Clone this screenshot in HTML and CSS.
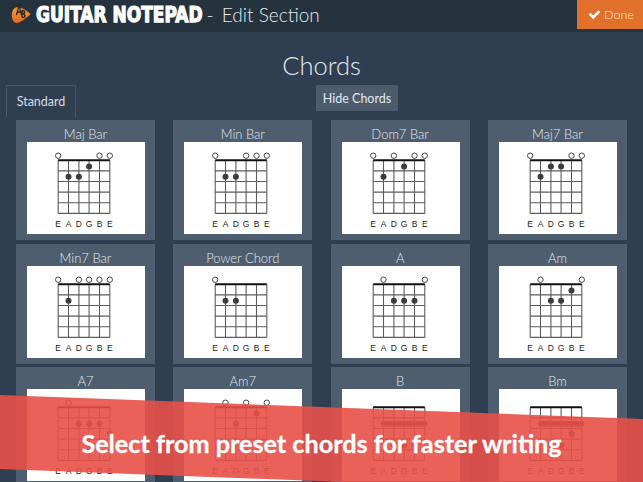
FILE: index.html
```html
<!DOCTYPE html>
<html lang="en">

<head>
    <meta charset="UTF-8">
    <title>Guitar Notepad - Edit Section</title>
    <link rel="stylesheet" href="styles.css">
</head>

<body>
    <svg class="defs" width="0" height="0">
        <symbol id="fretboard" viewBox="0 0 118 92">
            <path class="frets" d="M31.2 28.9H82.8M31.2 39.5H82.8M31.2 50.1H82.8M31.2 60.8H82.8M31.2 71.4H82.8" />
            <path class="frets" d="M31.2 18.3V71.4M41.5 18.3V71.4M51.9 18.3V71.4M62.1 18.3V71.4M72.5 18.3V71.4M82.8 18.3V71.4" />
            <path class="nut" d="M31.2 18.3H82.8" />
        </symbol>
    </svg>

    <header class="topbar">
        <div class="brand">
            <svg class="logo" viewBox="0 0 20 20">
                <defs>
                    <linearGradient id="pick" x1="0" y1="0" x2="0" y2="1">
                        <stop offset="0" stop-color="#f0a030" />
                        <stop offset="1" stop-color="#e8661f" />
                    </linearGradient>
                </defs>
                <path fill="url(#pick)" d="M5 3.5C8 2.5 13 4.5 19 9.5C19.5 10 19.3 10.6 18.8 10.9C14 14.5 9 19 5.5 19C2.5 19 .8 15 .8 11.5C.8 8 2 4.5 5 3.5Z" />
                <path class="logo-mark" d="M6 .8H10M8 .8L5.5 11M8 .8L10.5 11M6.5 8H9.8M11 6.5V13.5M11 6.5C14.5 6.5 14.5 9.8 11 9.8C15 9.8 15 13.5 11 13.5" />
            </svg>
            <span class="wordmark">GUITAR NOTEPAD</span>
            <span class="page-name"><span class="dash">-</span> Edit Section</span>
        </div>
        <button class="done-button">
            <svg class="check" viewBox="0 0 1792 1792"><path d="M1671 566q0 40-28 68l-724 724-136 136q-28 28-68 28t-68-28l-136-136-362-362q-28-28-28-68t28-68l136-136q28-28 68-28t68 28l294 295 656-657q28-28 68-28t68 28l136 136q28 28 28 68z" /></svg>
            Done
        </button>
    </header>

    <h1 class="title">Chords</h1>

    <div class="toolbar">
        <div class="tab">Standard</div>
        <button class="hide-button">Hide Chords</button>
    </div>

    <div class="chord-grid">
        <div class="chord">
            <div class="chord-name">Maj Bar</div>
            <svg class="diagram" viewBox="0 0 118 92">
                <use href="#fretboard" />
                <g class="open"><circle cx="31.2" cy="13.7" r="2.7" /><circle cx="72.5" cy="13.7" r="2.7" /><circle cx="82.8" cy="13.7" r="2.7" /></g>
                <g class="dots"><circle cx="62.1" cy="24.4" r="3" /><circle cx="41.5" cy="34.7" r="3" /><circle cx="51.9" cy="34.7" r="3" /></g>
                <text class="strings" x="31.2 41.5 51.9 62.1 72.5 82.8" y="84.5">EADGBE</text>
            </svg>
        </div>
        <div class="chord">
            <div class="chord-name">Min Bar</div>
            <svg class="diagram" viewBox="0 0 118 92">
                <use href="#fretboard" />
                <g class="open"><circle cx="31.2" cy="13.7" r="2.7" /><circle cx="62.1" cy="13.7" r="2.7" /><circle cx="72.5" cy="13.7" r="2.7" /><circle cx="82.8" cy="13.7" r="2.7" /></g>
                <g class="dots"><circle cx="41.5" cy="34.7" r="3" /><circle cx="51.9" cy="34.7" r="3" /></g>
                <text class="strings" x="31.2 41.5 51.9 62.1 72.5 82.8" y="84.5">EADGBE</text>
            </svg>
        </div>
        <div class="chord">
            <div class="chord-name">Dom7 Bar</div>
            <svg class="diagram" viewBox="0 0 118 92">
                <use href="#fretboard" />
                <g class="open"><circle cx="31.2" cy="13.7" r="2.7" /><circle cx="51.9" cy="13.7" r="2.7" /><circle cx="72.5" cy="13.7" r="2.7" /><circle cx="82.8" cy="13.7" r="2.7" /></g>
                <g class="dots"><circle cx="62.1" cy="24.4" r="3" /><circle cx="41.5" cy="34.7" r="3" /></g>
                <text class="strings" x="31.2 41.5 51.9 62.1 72.5 82.8" y="84.5">EADGBE</text>
            </svg>
        </div>
        <div class="chord">
            <div class="chord-name">Maj7 Bar</div>
            <svg class="diagram" viewBox="0 0 118 92">
                <use href="#fretboard" />
                <g class="open"><circle cx="31.2" cy="13.7" r="2.7" /><circle cx="72.5" cy="13.7" r="2.7" /><circle cx="82.8" cy="13.7" r="2.7" /></g>
                <g class="dots"><circle cx="51.9" cy="24.4" r="3" /><circle cx="62.1" cy="24.4" r="3" /><circle cx="41.5" cy="34.7" r="3" /></g>
                <text class="strings" x="31.2 41.5 51.9 62.1 72.5 82.8" y="84.5">EADGBE</text>
            </svg>
        </div>

        <div class="chord">
            <div class="chord-name">Min7 Bar</div>
            <svg class="diagram" viewBox="0 0 118 92">
                <use href="#fretboard" />
                <g class="open"><circle cx="31.2" cy="13.7" r="2.7" /><circle cx="51.9" cy="13.7" r="2.7" /><circle cx="62.1" cy="13.7" r="2.7" /><circle cx="72.5" cy="13.7" r="2.7" /><circle cx="82.8" cy="13.7" r="2.7" /></g>
                <g class="dots"><circle cx="41.5" cy="34.7" r="3" /></g>
                <text class="strings" x="31.2 41.5 51.9 62.1 72.5 82.8" y="84.5">EADGBE</text>
            </svg>
        </div>
        <div class="chord">
            <div class="chord-name">Power Chord</div>
            <svg class="diagram" viewBox="0 0 118 92">
                <use href="#fretboard" />
                <g class="open"><circle cx="31.2" cy="13.7" r="2.7" /></g>
                <g class="dots"><circle cx="41.5" cy="34.7" r="3" /><circle cx="51.9" cy="34.7" r="3" /></g>
                <text class="strings" x="31.2 41.5 51.9 62.1 72.5 82.8" y="84.5">EADGBE</text>
            </svg>
        </div>
        <div class="chord">
            <div class="chord-name">A</div>
            <svg class="diagram" viewBox="0 0 118 92">
                <use href="#fretboard" />
                <g class="open"><circle cx="41.5" cy="13.7" r="2.7" /><circle cx="82.8" cy="13.7" r="2.7" /></g>
                <g class="dots"><circle cx="51.9" cy="34.7" r="3" /><circle cx="62.1" cy="34.7" r="3" /><circle cx="72.5" cy="34.7" r="3" /></g>
                <text class="strings" x="31.2 41.5 51.9 62.1 72.5 82.8" y="84.5">EADGBE</text>
            </svg>
        </div>
        <div class="chord">
            <div class="chord-name">Am</div>
            <svg class="diagram" viewBox="0 0 118 92">
                <use href="#fretboard" />
                <g class="open"><circle cx="41.5" cy="13.7" r="2.7" /><circle cx="82.8" cy="13.7" r="2.7" /></g>
                <g class="dots"><circle cx="72.5" cy="24.4" r="3" /><circle cx="51.9" cy="34.7" r="3" /><circle cx="62.1" cy="34.7" r="3" /></g>
                <text class="strings" x="31.2 41.5 51.9 62.1 72.5 82.8" y="84.5">EADGBE</text>
            </svg>
        </div>

        <div class="chord">
            <div class="chord-name">A7</div>
            <svg class="diagram" viewBox="0 0 118 92">
                <use href="#fretboard" />
                <g class="open"><circle cx="41.5" cy="13.7" r="2.7" /></g>
                <g class="dots"><circle cx="51.9" cy="34.7" r="3" /><circle cx="62.1" cy="34.7" r="3" /><circle cx="72.5" cy="34.7" r="3" /><circle cx="82.8" cy="44.4" r="3" /></g>
                <text class="strings" x="31.2 41.5 51.9 62.1 72.5 82.8" y="84.5">EADGBE</text>
            </svg>
        </div>
        <div class="chord">
            <div class="chord-name">Am7</div>
            <svg class="diagram" viewBox="0 0 118 92">
                <use href="#fretboard" />
                <g class="open"><circle cx="41.5" cy="13.7" r="2.7" /><circle cx="62.1" cy="13.7" r="2.7" /><circle cx="82.8" cy="13.7" r="2.7" /></g>
                <g class="dots"><circle cx="72.5" cy="24.4" r="3" /><circle cx="51.9" cy="34.7" r="3" /></g>
                <text class="strings" x="31.2 41.5 51.9 62.1 72.5 82.8" y="84.5">EADGBE</text>
            </svg>
        </div>
        <div class="chord">
            <div class="chord-name">B</div>
            <svg class="diagram" viewBox="0 0 118 92">
                <use href="#fretboard" />
                <path class="barre" d="M41.5 34.7H82.8" />
                <g class="dots"><circle cx="51.9" cy="56" r="3" /><circle cx="62.1" cy="56" r="3" /><circle cx="72.5" cy="56" r="3" /></g>
                <text class="strings" x="31.2 41.5 51.9 62.1 72.5 82.8" y="84.5">EADGBE</text>
            </svg>
        </div>
        <div class="chord">
            <div class="chord-name">Bm</div>
            <svg class="diagram" viewBox="0 0 118 92">
                <use href="#fretboard" />
                <path class="barre" d="M41.5 34.7H82.8" />
                <g class="dots"><circle cx="72.5" cy="45" r="3" /><circle cx="51.9" cy="56" r="3" /><circle cx="62.1" cy="56" r="3" /></g>
                <text class="strings" x="31.2 41.5 51.9 62.1 72.5 82.8" y="84.5">EADGBE</text>
            </svg>
        </div>
    </div>

    <div class="ribbon">Select from preset chords for faster writing</div>
</body>

</html>
```

FILE: styles.css
```css
/* Estilo global */
body {
    font-family: Lato, sans-serif;
    background-color: #2f3f51;
    color: #e4e9ee;
    margin: 0;
    width: 643px;
    height: 482px;
    overflow: hidden;
    position: relative;
}

.defs {
    position: absolute;
}

/* barra superior */
.topbar {
    display: flex;
    justify-content: space-between;
    align-items: flex-start;
    height: 32px;
    background-color: #25333f;
}

.brand {
    display: flex;
    align-items: center;
    height: 28px;
    padding-left: 11px;
}

.logo {
    width: 20px;
    height: 20px;
    margin-right: 5px;
}

.logo-mark {
    fill: none;
    stroke: #2c2620;
    stroke-width: 1.3;
}

.wordmark {
    display: inline-block;
    font-family: "DejaVu Sans", sans-serif;
    font-weight: 700;
    font-size: 17px;
    color: #fff;
    -webkit-text-stroke: 1px #fff;
    transform: scaleY(1.25);
    white-space: nowrap;
}

.page-name {
    font-size: 19px;
    font-weight: 300;
    margin-left: 4px;
    white-space: nowrap;
}

.dash {
    margin-right: 3px;
}

.done-button {
    display: flex;
    align-items: center;
    gap: 3px;
    width: 66px;
    height: 29px;
    padding: 0 0 0 11px;
    border: none;
    background-color: #e0702a;
    color: #fbe6d8;
    font-family: Lato, sans-serif;
    font-size: 12.5px;
    font-weight: 300;
}

.check {
    width: 13px;
    height: 13px;
    fill: #fff;
}

.title {
    margin: 16px 0 0;
    height: 37px;
    line-height: 34px;
    text-align: center;
    font-size: 25.5px;
    font-weight: 300;
}

/* abas e botão de esconder */
.toolbar {
    display: flex;
    align-items: flex-start;
    height: 35px;
    padding-left: 6px;
}

.tab {
    width: 68px;
    height: 31px;
    line-height: 31px;
    border: 1px solid #45566a;
    border-bottom: none;
    text-align: center;
    font-size: 12.5px;
    color: #d5dce3;
}

.hide-button {
    width: 82px;
    height: 26px;
    margin-left: 240px;
    padding: 0;
    border: none;
    background-color: #4c5c6d;
    color: #e4e9ee;
    font-family: Lato, sans-serif;
    font-size: 12.5px;
}

/* grade de acordes */
.chord-grid {
    display: grid;
    grid-template-columns: repeat(4, 139px);
    column-gap: 18.33px;
    row-gap: 3.5px;
    padding-left: 16px;
}

.chord {
    height: 120px;
    background-color: #4e5e6f;
    padding: 0 11px;
    box-sizing: border-box;
}

.chord-name {
    height: 22px;
    line-height: 29px;
    text-align: center;
    font-size: 13px;
    font-weight: 300;
    color: #e2e8ed;
}

.diagram {
    display: block;
    width: 118px;
    height: 92px;
    margin: 0 auto;
    background-color: #fff;
}

.frets {
    fill: none;
    stroke: #5c5c5c;
    stroke-width: 1.1;
}

.nut {
    fill: none;
    stroke: #111;
    stroke-width: 2;
}

.barre {
    fill: none;
    stroke: #444;
    stroke-width: 5.5;
    stroke-linecap: round;
}

.open circle {
    fill: #fff;
    stroke: #444;
    stroke-width: 1;
}

.dots circle {
    fill: #3c3c3c;
}

.strings {
    font-family: "Liberation Sans", sans-serif;
    font-size: 8.5px;
    text-anchor: middle;
    fill: #222;
}

/* faixa vermelha */
.ribbon {
    position: absolute;
    left: 0;
    top: 395px;
    width: 643px;
    height: 87px;
    box-sizing: border-box;
    padding-top: 33px;
    background-color: rgba(232, 80, 72, 0.9);
    clip-path: polygon(0 0, 100% 24px, 100% 100%, 344px 100%, 0 74px);
    text-align: center;
    font-size: 25.2px;
    font-weight: 700;
    -webkit-text-stroke: .3px #fff;
    color: #fff;
}
```
